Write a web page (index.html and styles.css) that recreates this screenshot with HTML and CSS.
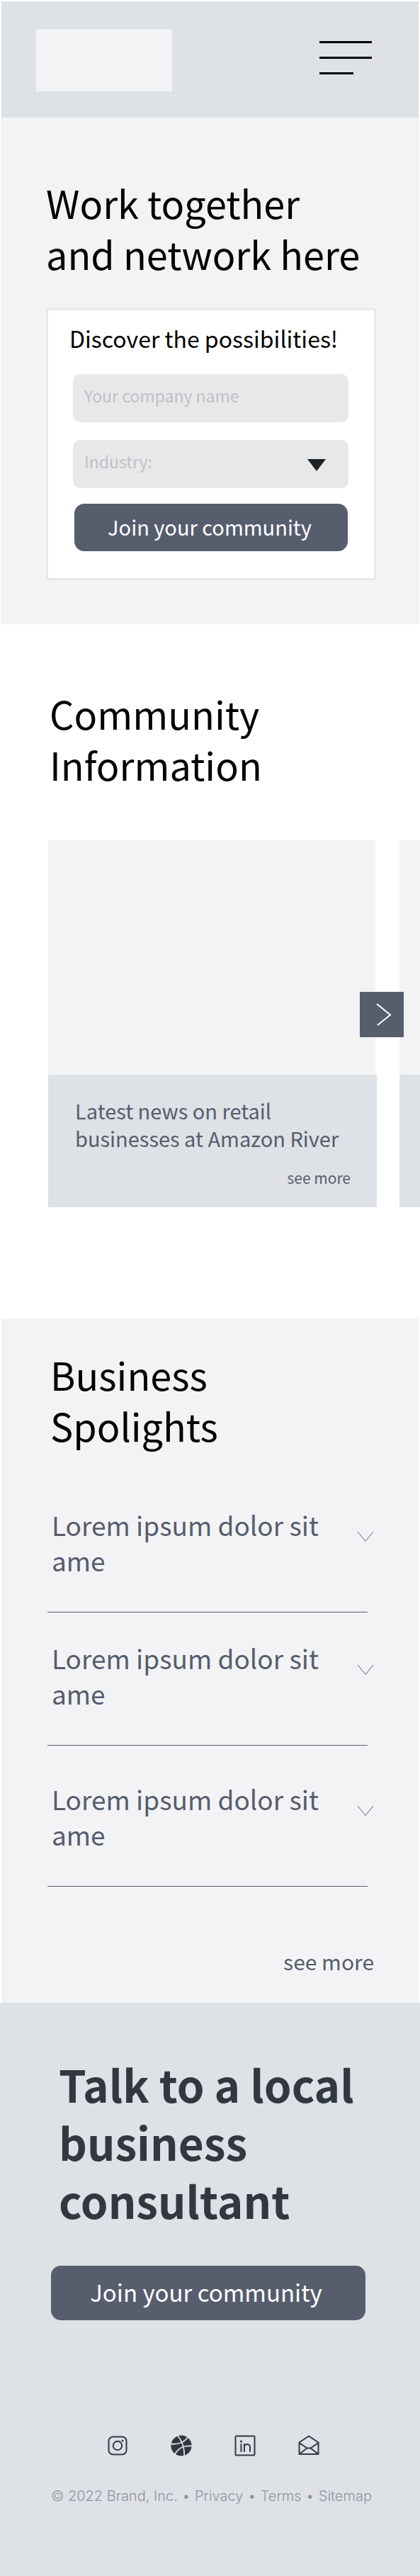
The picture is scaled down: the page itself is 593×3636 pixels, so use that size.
FILE: index.html
```html
<!DOCTYPE html>
<html lang="en">
<head>
<meta charset="utf-8">
<meta name="viewport" content="width=device-width, initial-scale=1">
<title>Community</title>
<link rel="stylesheet" href="styles.css">
</head>
<body>
<header class="topbar">
  <a class="logo" href="#" aria-label="Home"></a>
  <button class="menu" type="button" aria-label="Menu">
    <span class="menu-line"></span>
    <span class="menu-line"></span>
    <span class="menu-line menu-line-short"></span>
  </button>
</header>
<main>
  <section class="hero">
    <h1 class="heading">Work together<br>and network here</h1>
    <form class="signup">
      <h2 class="signup-title">Discover the possibilities!</h2>
      <input class="field" type="text" placeholder="Your company name" aria-label="Your company name">
      <div class="select-wrap">
        <select class="field" aria-label="Industry">
          <option>Industry:</option>
        </select>
        <svg class="caret" viewBox="0 0 26 17" aria-hidden="true"><path d="M0 0h26L13 17z" fill="#1d2128"/></svg>
      </div>
      <button class="button button-form" type="button">Join your community</button>
    </form>
  </section>

  <section class="community">
    <h2 class="heading">Community<br>Information</h2>
    <div class="carousel">
      <div class="track">
        <article class="card">
          <div class="card-image"></div>
          <div class="card-body">
            <p class="card-title">Latest news on retail<br>businesses at Amazon River</p>
            <a class="card-more" href="#">see more</a>
          </div>
        </article>
        <article class="card">
          <div class="card-image"></div>
          <div class="card-body"></div>
        </article>
      </div>
      <button class="next" type="button" aria-label="Next">
        <svg class="next-icon" viewBox="0 0 22 34" aria-hidden="true"><path d="M1 2l19 15.500L2 32" fill="none" stroke="#fff" stroke-width="2"/></svg>
      </button>
    </div>
  </section>

  <section class="spotlights">
    <h2 class="heading">Business<br>Spolights</h2>
    <div class="list">
      <button class="item" type="button">
        <span class="item-text">Lorem ipsum dolor sit ame</span>
        <svg class="item-icon" viewBox="0 0 24 16" aria-hidden="true"><path d="M1 1l11 13.500L23 1" fill="none" stroke="#565d6d"/></svg>
      </button>
      <button class="item" type="button">
        <span class="item-text">Lorem ipsum dolor sit ame</span>
        <svg class="item-icon" viewBox="0 0 24 16" aria-hidden="true"><path d="M1 1l11 13.500L23 1" fill="none" stroke="#565d6d"/></svg>
      </button>
      <button class="item item-last" type="button">
        <span class="item-text">Lorem ipsum dolor sit ame</span>
        <svg class="item-icon" viewBox="0 0 24 16" aria-hidden="true"><path d="M1 1l11 13.500L23 1" fill="none" stroke="#565d6d"/></svg>
      </button>
    </div>
    <a class="list-more" href="#">see more</a>
  </section>
</main>

<footer class="footer">
  <h2 class="footer-title">Talk to a local business consultant</h2>
  <button class="button button-large" type="button">Join your community</button>
  <nav class="social" aria-label="Social">
    <a class="social-link" href="#" aria-label="Instagram">
      <svg viewBox="0 0 30 30" fill="none" stroke="#323842" stroke-width="2"><rect x="2.500" y="2.500" width="25" height="25" rx="6"/><circle cx="15" cy="15" r="6.200"/><circle cx="22" cy="8" r="1.600" fill="#323842" stroke="none"/></svg>
    </a>
    <a class="social-link" href="#" aria-label="Dribbble">
      <svg viewBox="0 0 30 30" fill="none"><circle cx="15" cy="15" r="14.600" fill="#323842"/><path d="M9 0C16 8 20 18 19 31M0 12.500c9 1 18-1 24.500-9.500M6 27C11 18 18 14.500 30 15.500" stroke="#dee1e6" stroke-width="1.800"/></svg>
    </a>
    <a class="social-link" href="#" aria-label="LinkedIn">
      <svg viewBox="0 0 30 30" fill="none" stroke="#323842" stroke-width="2" stroke-linecap="round"><rect x="1.500" y="1.500" width="27" height="27" rx="1"/><path d="M9.500 13v10M14 23V13M14 17c0-5.500 8-5.500 8 0v6"/><circle cx="9.500" cy="9" r="1.600" fill="#323842" stroke="none"/></svg>
    </a>
    <a class="social-link" href="#" aria-label="Email">
      <svg viewBox="0 0 30 30" fill="none" stroke="#323842" stroke-width="2" stroke-linejoin="round"><path d="M1.500 10.500L15 1.500l13.500 9V27h-27zM1.500 11L12.500 18.500h5L28.500 11M1.500 27l11-8.500M28.500 27l-11-8.500"/></svg>
    </a>
  </nav>
  <div class="legal">
    <span>© 2022 Brand, Inc.</span>
    <span>•</span>
    <a href="#">Privacy</a>
    <span>•</span>
    <a href="#">Terms</a>
    <span>•</span>
    <a href="#">Sitemap</a>
  </div>
</footer>
</body>
</html>
```

FILE: styles.css
```css
* {
  box-sizing: border-box;
}

body {
  margin: 0;
  background: #fff;
  color: #000;
  font-family: "Noto Sans CJK SC", "Noto Sans", sans-serif;
}

h1, h2, p {
  margin: 0;
  font-weight: 400;
}

a {
  color: inherit;
  text-decoration: none;
}

button, input, select {
  margin: 0;
  border: 0;
  font-family: inherit;
}

.topbar {
  display: flex;
  justify-content: space-between;
  align-items: flex-start;
  margin: 2px 2px 0;
  padding: 39px 66px 37px 49px;
  background: #dee1e6;
}

.logo {
  width: 192px;
  height: 88px;
  background: #f3f3f5;
}

.menu {
  display: flex;
  flex-direction: column;
  gap: 19px;
  width: 74px;
  margin-top: 17px;
  padding: 0;
  background: none;
}

.menu-line {
  width: 100%;
  height: 3px;
  background: #000;
}

.menu-line-short {
  width: 48px;
}

.hero {
  margin: 0 1px;
  padding: 84px 61px 62px 64px;
  background: #f3f3f5;
}

.heading {
  font-size: 54px;
  line-height: 72px;
}

.signup {
  margin-top: 41px;
  padding: 15px 36px 38px 35px;
  border: 3px solid #e8e8e8;
  background: #fff;
}

.signup-title {
  margin-bottom: 27px;
  margin-left: -5px;
  font-size: 32px;
  line-height: 48px;
  white-space: nowrap;
}

.field {
  display: block;
  width: 100%;
  height: 68px;
  padding: 0 16px 8px;
  border-radius: 10px;
  background: #e8e8e8;
  color: #bdc1ca;
  font-size: 23px;
  appearance: none;
}

.field::placeholder {
  color: #bdc1ca;
  opacity: 1;
}

.select-wrap {
  position: relative;
  margin: 25px 0 22px;
}

.caret {
  position: absolute;
  top: 27px;
  right: 32px;
  width: 26px;
  height: 17px;
  pointer-events: none;
}

.button {
  display: block;
  border-radius: 14px;
  background: #565d6d;
  color: #fff;
  text-align: center;
  white-space: nowrap;
}

.button-form {
  width: calc(100% - 3px);
  height: 67px;
  margin-left: 2px;
  padding: 0 4px 4px 0;
  font-size: 29px;
}

.community {
  padding: 90px 0 157px;
}

.community .heading {
  padding-left: 70px;
}

.carousel {
  position: relative;
  margin-top: 71px;
}

.track {
  display: flex;
  gap: 32px;
  padding-left: 68px;
  overflow: hidden;
}

.card {
  flex: 0 0 calc(100% - 61px);
}

.card-image {
  height: 331px;
  margin-right: 2px;
  background: #f3f3f5;
}

.card-body {
  display: flex;
  flex-direction: column;
  height: 187px;
  padding: 31px 37px 26px 38px;
  background: #dee1e6;
  color: #565d6d;
}

.card-title {
  font-size: 29px;
  line-height: 39px;
  white-space: nowrap;
}

.card-more {
  align-self: flex-end;
  margin-top: auto;
  font-size: 21px;
  line-height: 32px;
}

.next {
  position: absolute;
  top: 214px;
  right: 23px;
  display: flex;
  align-items: center;
  justify-content: center;
  width: 62px;
  height: 64px;
  padding: 0 0 0 6px;
  background: #565d6d;
}

.next-icon {
  width: 22px;
  height: 34px;
}

.spotlights {
  display: flex;
  flex-direction: column;
  margin: 0 2px;
  padding: 43px 63px 35px 65px;
  background: #f3f3f5;
  color: #565d6d;
}

.spotlights .heading {
  padding-left: 4px;
  color: #000;
}

.list {
  margin-top: 40px;
}

.item {
  display: flex;
  justify-content: space-between;
  align-items: flex-start;
  width: calc(100% - 9px);
  padding: 39px 0 48px 6px;
  border-bottom: 1px solid #565d6d;
  background: none;
  color: inherit;
  font-size: 37px;
  line-height: 50px;
  text-align: left;
}

.item-last {
  padding-top: 50px;
}

.item-text {
  width: 400px;
}

.item-icon {
  flex: none;
  width: 24px;
  height: 16px;
  margin: 34px -9px 0 0;
}

.list-more {
  align-self: flex-end;
  margin-top: 81px;
  font-size: 30px;
  line-height: 48px;
}

.footer {
  padding: 73px 68px 97px 72px;
  background: #dee1e6;
}

.footer-title {
  max-width: 460px;
  padding-left: 11px;
  color: #323842;
  font-size: 62px;
  font-weight: 700;
  line-height: 82px;
}

.button-large {
  width: calc(100% - 9px);
  height: 77px;
  margin-top: 52px;
  padding: 0 6px 4px 0;
  font-size: 33px;
}

.social {
  display: flex;
  justify-content: center;
  gap: 60px;
  margin-top: 162px;
  padding-left: 4px;
}

.social-link,
.social-link svg {
  display: block;
  width: 30px;
  height: 30px;
}

.legal {
  display: flex;
  justify-content: space-between;
  margin-top: 40px;
  color: #9095a0;
  font-family: Inter, sans-serif;
  font-size: 20px;
  font-weight: 300;
  line-height: 32px;
  white-space: nowrap;
}
```
